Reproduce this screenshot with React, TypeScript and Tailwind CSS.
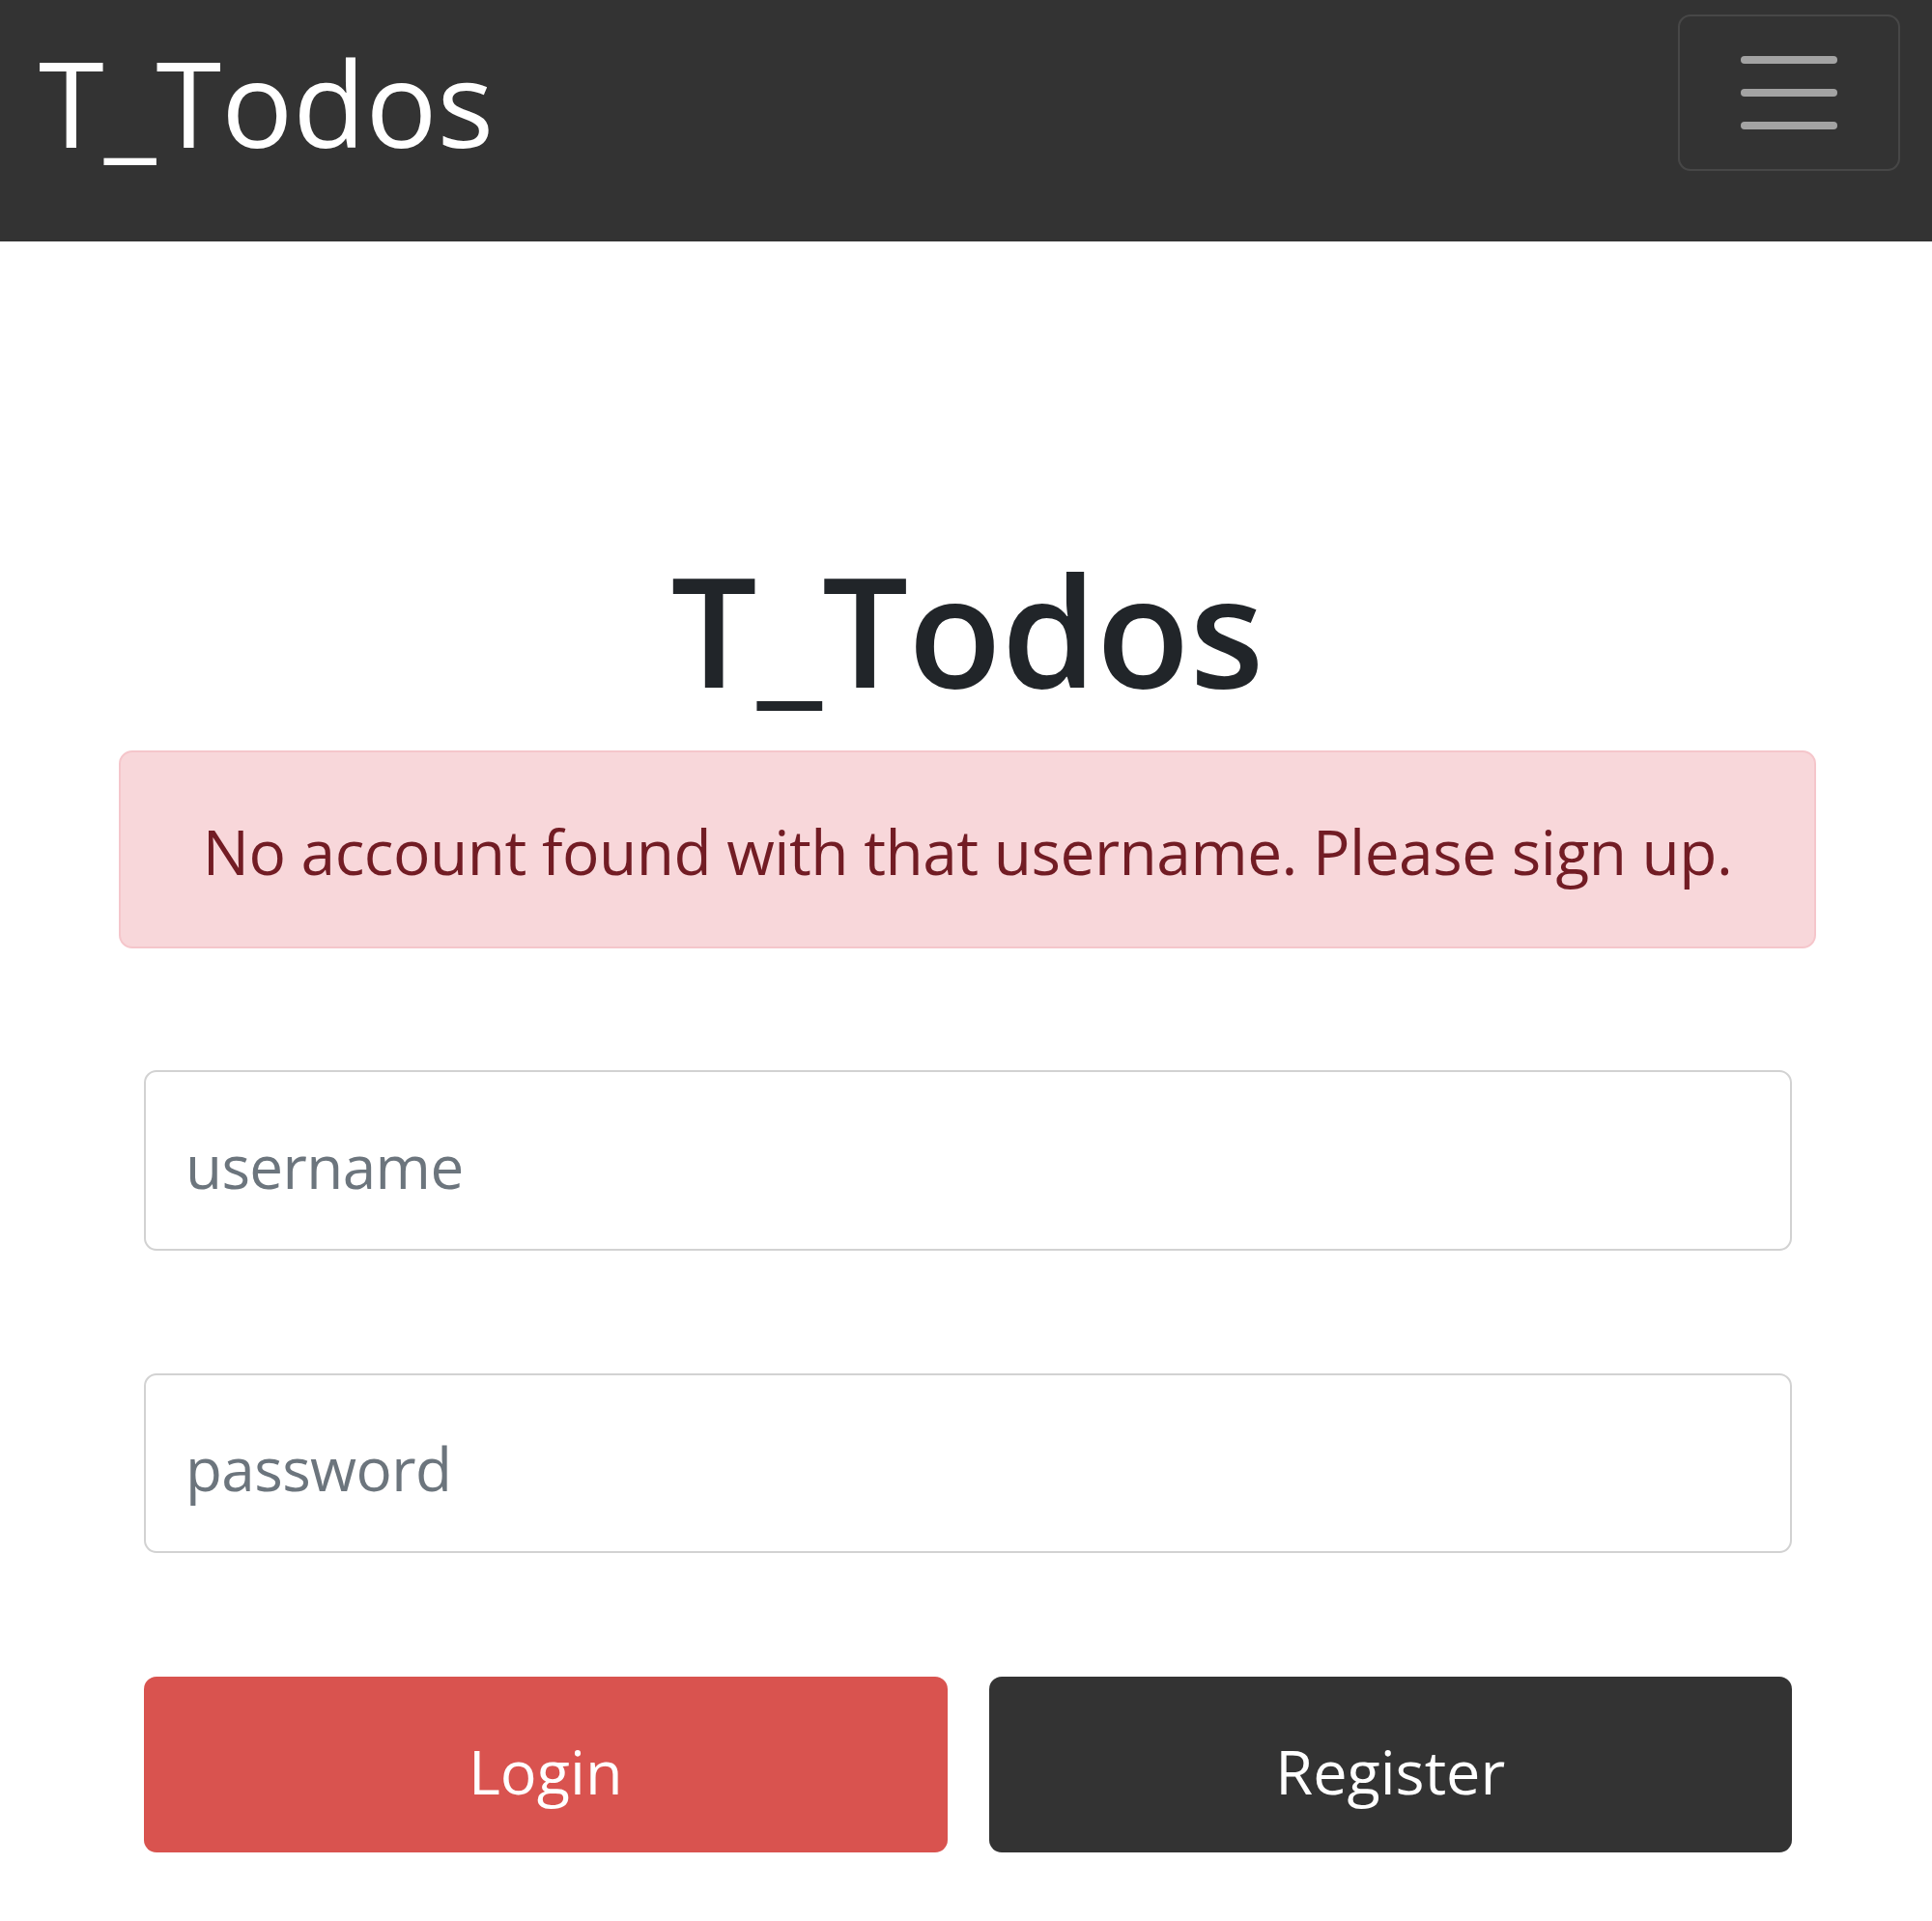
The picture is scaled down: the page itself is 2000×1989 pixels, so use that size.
import React from "react";

function Navbar() {
  return (
    <nav className="flex h-[250px] items-start justify-between bg-[#333] pl-[40px] pr-[33px]">
      <a href="#" className="mt-[44px] text-[123px] leading-none text-white">
        T_Todos
      </a>
      <button
        type="button"
        aria-label="Toggle navigation"
        className="mt-[15px] flex h-[162px] w-[230px] flex-col items-center justify-center gap-[26px] rounded-[13px] border-2 border-white/10"
      >
        <span className="block h-[8px] w-[100px] rounded-full bg-white/55" />
        <span className="block h-[8px] w-[100px] rounded-full bg-white/55" />
        <span className="block h-[8px] w-[100px] rounded-full bg-white/55" />
      </button>
    </nav>
  );
}

export default function App() {
  return (
    <div className="min-h-[1989px] bg-white font-['Open_Sans',sans-serif]">
      <Navbar />

      <main className="pl-[123px] pr-[120px]">
        <h1 className="mt-[322px] text-center text-[158px] font-semibold leading-none text-[#212529]">
          T_Todos
        </h1>

        {/* error from the login attempt */}
        <div className="mt-[47px] rounded-[14px] border-2 border-[#f5c6cb] bg-[#f8d7da] pb-[66px] pt-[71px] text-center text-[64px] leading-none tracking-[-0.5px] text-[#721c24]">
          No account found with that username. Please sign up.
        </div>

        <form className="pl-[26px] pr-[25px]" onSubmit={(e) => e.preventDefault()}>
          <input
            type="text"
            placeholder="username"
            className="mt-[126px] block h-[187px] w-full rounded-[13px] border-2 border-[#d2d2d2] bg-white pl-[41px] pt-[10px] text-[62px] tracking-[-0.6px] text-[#495057] outline-none placeholder:text-[#6c757d]"
          />
          <input
            type="password"
            placeholder="password"
            className="mt-[127px] block h-[186px] w-full rounded-[13px] border-2 border-[#d2d2d2] bg-white pl-[41px] pt-[10px] text-[62px] tracking-[-0.6px] text-[#495057] outline-none placeholder:text-[#6c757d]"
          />

          <div className="mt-[128px] grid grid-cols-2 gap-[43px]">
            <button
              type="submit"
              className="flex h-[182px] items-center justify-center rounded-[13px] bg-[#d9534f] pt-[15px] text-[63px] text-white"
            >
              Login
            </button>
            <button
              type="button"
              className="flex h-[182px] items-center justify-center rounded-[13px] bg-[#333] pt-[15px] text-[63px] text-white"
            >
              Register
            </button>
          </div>
        </form>
      </main>
    </div>
  );
}
